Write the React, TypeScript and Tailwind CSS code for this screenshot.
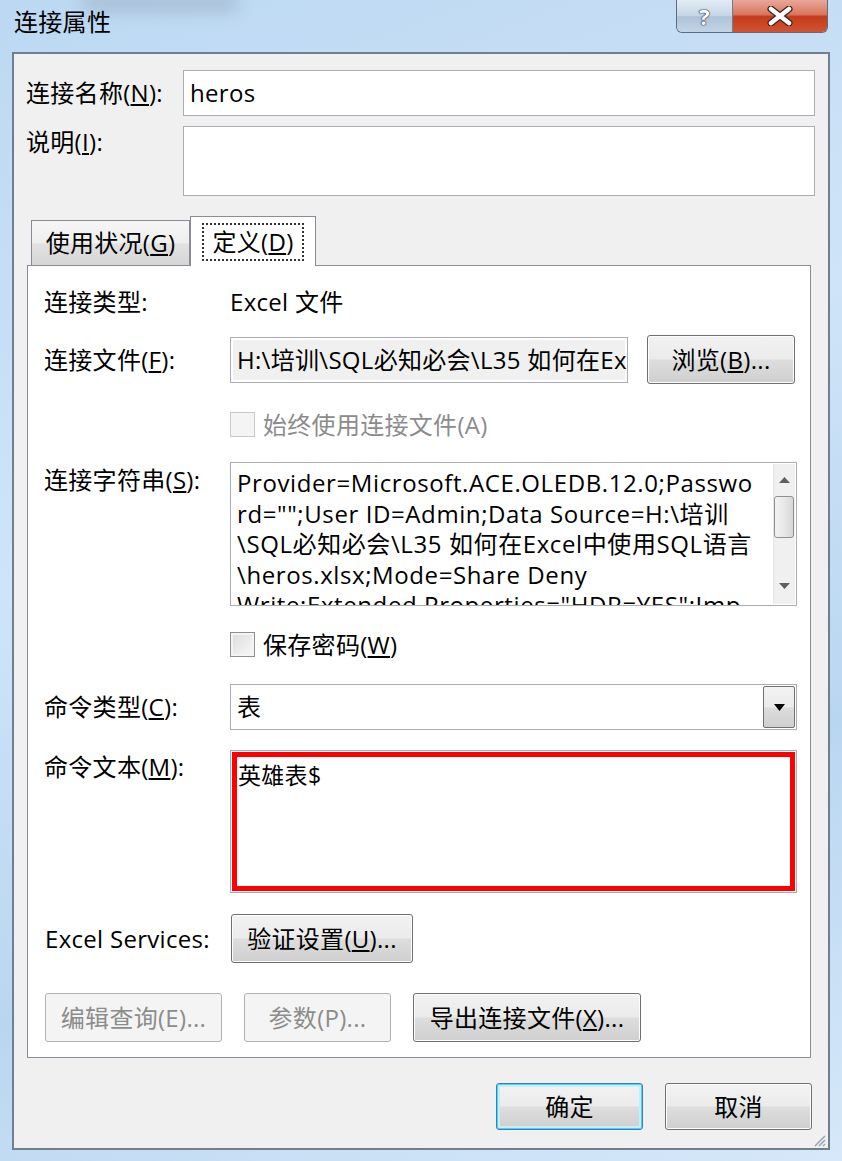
import React from 'react';

function Btn({
  children,
  className = '',
  disabled = false,
  primary = false,
}: {
  children: React.ReactNode;
  className?: string;
  disabled?: boolean;
  primary?: boolean;
}) {
  const base = 'flex shrink-0 items-center justify-center rounded-[3px] border text-[24px] leading-none';
  if (disabled) {
    return <div className={`${base} border-[#adb2b5] bg-[#f4f4f4] text-[#8c8c8c] ${className}`}>{children}</div>;
  }
  return (
    <div
      className={`${base} bg-[linear-gradient(#f2f2f2_0%,#ebebeb_48%,#dddddd_52%,#cfcfcf_100%)] text-black ${
        primary
          ? 'border-[#3c7fb1] shadow-[inset_0_0_0_1px_#4fd0f8,inset_0_0_0_3px_#c4eefc]'
          : 'border-[#707070] shadow-[inset_0_0_0_1px_#fcfcfc]'
      } ${className}`}
    >
      {children}
    </div>
  );
}

function Check({ disabled = false }: { disabled?: boolean }) {
  return (
    <div
      className={`h-[25px] w-[25px] shrink-0 border ${
        disabled
          ? 'border-[#c9c9c9] bg-[#f4f4f4]'
          : 'border-[#8f8f8f] bg-[linear-gradient(135deg,#dcdcdc,#f8f8f8)] shadow-[inset_0_0_0_2px_#f4f4f4]'
      }`}
    />
  );
}

const Label = ({ children, className = '' }: { children: React.ReactNode; className?: string }) => (
  <div className={`w-[186px] shrink-0 text-[24px] leading-[30px] text-black ${className}`}>{children}</div>
);

const connLines = [
  'Provider=Microsoft.ACE.OLEDB.12.0;Passwo',
  'rd="";User ID=Admin;Data Source=H:\\培训',
  '\\SQL必知必会\\L35 如何在Excel中使用SQL语言',
  '\\heros.xlsx;Mode=Share Deny',
  'Write;Extended Properties="HDR=YES";Imp',
];

export default function App() {
  return (
    <div className="relative h-[1161px] w-[842px] overflow-hidden bg-[linear-gradient(160deg,#bcd8f2_0%,#cfe4f8_40%,#b9d6f1_70%,#d6e8f9_100%)] [font-family:'Open_Sans','Noto_Sans_CJK_SC',sans-serif] tracking-[0.3px] text-black">
      {/* blurred shape behind the glass */}
      <div className="absolute left-[80px] top-[-10px] h-[24px] w-[160px] rounded-full bg-[#8fa3b8] opacity-40 blur-[8px]" />

      {/* title bar */}
      <div className="relative flex h-[52px] items-start justify-between">
        <div className="pl-[14px] pt-[5px] text-[24px] leading-[34px] text-black">连接属性</div>
        <div className="mr-[14px] flex h-[33px] overflow-hidden rounded-b-[6px] border border-t-0 border-[#5c6d80]">
          <div className="flex w-[56px] items-center justify-center border-r border-[#6f7f90] bg-[linear-gradient(#e3ecf5_0%,#c5d5e6_50%,#aec3d9_52%,#c2d3e5_100%)] text-[22px] font-bold leading-none text-white [text-shadow:0_0_2px_#2d3e50,0_0_1px_#2d3e50,0_0_1px_#2d3e50]">
            ?
          </div>
          <div className="flex w-[94px] items-center justify-center bg-[linear-gradient(#e9a799_0%,#d9775f_45%,#c43b1c_52%,#d2532f_100%)]">
            <svg width="26" height="20" viewBox="0 0 26 20">
              <path d="M4 3 L22 17 M22 3 L4 17" stroke="#3a2420" strokeWidth="7" strokeLinecap="round" />
              <path d="M4 3 L22 17 M22 3 L4 17" stroke="#ffffff" strokeWidth="4.5" strokeLinecap="round" />
            </svg>
          </div>
        </div>
      </div>

      {/* client area */}
      <div className="mx-[12px] flex h-[1098px] flex-col border-2 border-[#6e7f92] bg-[#f0f0f0] pl-[12px] pr-[13px] pt-[16px]">
        <div className="flex items-center">
          <div className="w-[157px] text-[24px]">
            连接名称(<u className="underline-offset-2">N</u>):
          </div>
          <div className="flex h-[46px] flex-1 items-center border border-[#abadb3] bg-white px-[6px] text-[24px]">heros</div>
        </div>
        <div className="mt-[10px] flex">
          <div className="w-[157px] pt-[1px] text-[24px] leading-[30px]">
            说明(<u className="underline-offset-2">I</u>):
          </div>
          <div className="h-[70px] flex-1 border border-[#abadb3] bg-white" />
        </div>

        {/* tabs */}
        <div className="ml-[1px] mr-[4px] mt-[20px] flex flex-col">
          <div className="flex items-end pl-[4px]">
            <div className="flex h-[45px] w-[159px] items-center justify-center border border-b-0 border-[#898c95] bg-[linear-gradient(#f6f6f6_0%,#eeeeee_50%,#e2e2e2_52%,#d6d6d6_100%)] text-[24px]">
              使用状况(<u className="underline-offset-2">G</u>)
            </div>
            <div className="relative z-10 -mb-px flex h-[50px] w-[126px] items-center justify-center border border-b-0 border-[#898c95] bg-white">
              <div className="flex h-[38px] w-[102px] items-center justify-center border-2 border-dotted border-[#333] text-[24px]">
                定义(<u className="underline-offset-2">D</u>)
              </div>
            </div>
          </div>

          {/* panel */}
          <div className="flex flex-col border border-[#898c95] bg-white pb-[15px] pl-[16px] pr-[13px] pt-[21px]">
            <div className="flex">
              <Label>连接类型:</Label>
              <div className="text-[24px] leading-[30px]">Excel 文件</div>
            </div>

            <div className="mt-[18px] flex items-center">
              <Label>
                连接文件(<u className="underline-offset-2">F</u>):
              </Label>
              <div className="flex h-[46px] w-[398px] items-center overflow-hidden whitespace-nowrap border border-[#abadb3] bg-[#f0f0f0] px-[6px] text-[24px] shadow-[inset_0_0_0_2px_#ffffff]">
                H:\培训\SQL必知必会\L35 如何在Excel中使用SQL语言\heros.xlsx
              </div>
              <Btn className="ml-[19px] h-[49px] w-[148px]">
                浏览(<u className="underline-offset-2">B</u>)...
              </Btn>
            </div>

            <div className="mt-[28px] flex items-center">
              <div className="w-[186px] shrink-0" />
              <Check disabled />
              <div className="ml-[8px] text-[24px] leading-[25px] text-[#8c8c8c]">始终使用连接文件(A)</div>
            </div>

            <div className="mt-[25px] flex">
              <Label className="pt-[3px]">
                连接字符串(<u className="underline-offset-2">S</u>):
              </Label>
              <div className="flex h-[144px] flex-1 border border-[#abadb3] bg-white">
                <div className="flex-1 overflow-hidden pl-[6px] pt-[5px] text-[24px] leading-[30.5px] tracking-[0.6px]">
                  {connLines.map((l) => (
                    <div key={l} className="whitespace-nowrap">
                      {l}
                    </div>
                  ))}
                </div>
                <div className="m-[1px] flex w-[22px] flex-col items-center bg-[#f0f0f0] shadow-[inset_1px_0_0_#e6e6e6]">
                  <div className="flex h-[32px] items-center justify-center">
                    <svg width="11" height="6" viewBox="0 0 11 6">
                      <path d="M5.5 0 L11 6 L0 6 Z" fill="#606060" />
                    </svg>
                  </div>
                  <div className="h-[42px] w-[20px] rounded-[3px] border border-[#8e8f8f] bg-[linear-gradient(90deg,#f3f3f3,#e8e8e8_50%,#d6d6d6)]" />
                  <div className="flex-1" />
                  <div className="flex h-[36px] items-center justify-center">
                    <svg width="11" height="6" viewBox="0 0 11 6">
                      <path d="M0 0 L11 0 L5.5 6 Z" fill="#606060" />
                    </svg>
                  </div>
                </div>
              </div>
            </div>

            <div className="mt-[26px] flex items-center">
              <div className="w-[186px] shrink-0" />
              <Check />
              <div className="ml-[8px] text-[24px] leading-[25px]">
                保存密码(<u className="underline-offset-2">W</u>)
              </div>
            </div>

            <div className="mt-[27px] flex items-center">
              <Label>
                命令类型(<u className="underline-offset-2">C</u>):
              </Label>
              <div className="flex h-[46px] flex-1 border border-[#abadb3] bg-white">
                <div className="flex flex-1 items-center px-[6px] text-[24px]">表</div>
                <div className="m-[1px] flex w-[32px] items-center justify-center rounded-[2px] border border-[#707070] bg-[linear-gradient(#f2f2f2_0%,#ebebeb_50%,#dddddd_52%,#cfcfcf_100%)]">
                  <svg width="11" height="7" viewBox="0 0 11 7">
                    <path d="M0 0 L11 0 L5.5 7 Z" fill="#000" />
                  </svg>
                </div>
              </div>
            </div>

            <div className="mt-[20px] flex">
              <Label className="pt-[2px]">
                命令文本(<u className="underline-offset-2">M</u>):
              </Label>
              <div className="h-[143px] flex-1 border border-[#abadb3] bg-white p-[1px]">
                <div className="h-full border-[5px] border-[#ff0000] px-[1px] pt-[3px] text-[23px] leading-[30px]">英雄表$</div>
              </div>
            </div>

            <div className="mt-[21px] flex items-center">
              <Label className="ml-[1px] w-[185px]">Excel Services:</Label>
              <Btn className="h-[49px] w-[182px]">
                验证设置(<u className="underline-offset-2">U</u>)...
              </Btn>
            </div>

            <div className="ml-[1px] mt-[30px] flex gap-[22px]">
              <Btn disabled className="h-[49px] w-[177px]">
                编辑查询(E)...
              </Btn>
              <Btn disabled className="h-[49px] w-[147px]">
                参数(P)...
              </Btn>
              <Btn className="h-[49px] w-[228px]">
                导出连接文件(<u className="underline-offset-2">X</u>)...
              </Btn>
            </div>
          </div>
        </div>

        <div className="mr-[3px] mt-[25px] flex justify-end gap-[22px]">
          <Btn primary className="h-[47px] w-[147px]">
            确定
          </Btn>
          <Btn className="h-[47px] w-[147px]">取消</Btn>
        </div>

        <div className="flex-1" />
        <div className="-mr-[11px] mb-[1px] flex justify-end">
          <svg width="14" height="14" viewBox="0 0 14 14">
            <path d="M13 3 L3 13 M13 7 L7 13 M13 11 L11 13" stroke="#9aa4ae" strokeWidth="1.5" />
          </svg>
        </div>
      </div>
    </div>
  );
}
